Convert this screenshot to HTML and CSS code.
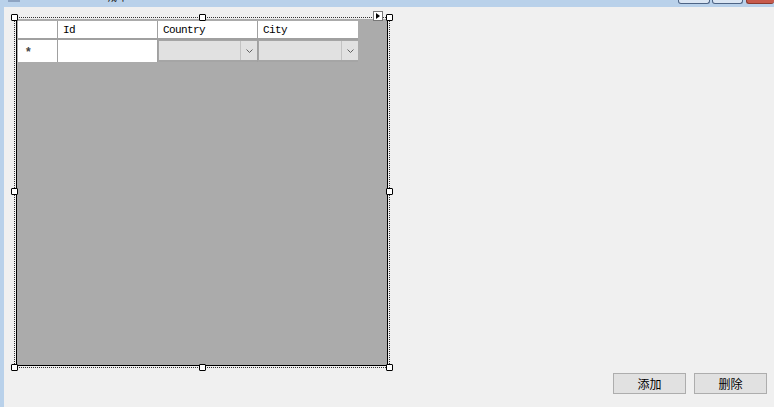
FILE: index.html
```html
<!DOCTYPE html>
<html lang="zh-CN">

<head>
    <meta charset="UTF-8">
    <meta name="viewport" content="width=device-width, initial-scale=1.0">
    <title>城市管理</title>
    <link rel="stylesheet" href="styles.css">
</head>

<body>
    <div class="titlebar">
        <span class="app-icon"></span>
        <span class="title">城市</span>
        <div class="win-controls">
            <span class="ctl min"></span>
            <span class="ctl max"></span>
            <span class="ctl close"></span>
        </div>
    </div>

    <div class="frame">
        <div class="frame-edge"></div>

        <div class="client">
            <div class="selected">
                <div class="grid">
                    <div class="table">
                        <div class="cell head"></div>
                        <div class="cell head">Id</div>
                        <div class="cell head">Country</div>
                        <div class="cell head">City</div>

                        <div class="cell row-head">*</div>
                        <div class="cell"></div>
                        <div class="cell combo">
                            <span class="combo-text"></span>
                            <span class="combo-btn">
                                <svg width="7" height="4" viewBox="0 0 7 4"><path d="M0.5 0.5 L3.5 3.5 L6.5 0.5" fill="none" stroke="#606060" stroke-width="1"/></svg>
                            </span>
                        </div>
                        <div class="cell combo">
                            <span class="combo-text"></span>
                            <span class="combo-btn">
                                <svg width="7" height="4" viewBox="0 0 7 4"><path d="M0.5 0.5 L3.5 3.5 L6.5 0.5" fill="none" stroke="#606060" stroke-width="1"/></svg>
                            </span>
                        </div>
                    </div>
                </div>

                <!-- designer selection handles -->
                <span class="handle h-tl"></span>
                <span class="handle h-tc"></span>
                <span class="handle h-tr"></span>
                <span class="handle h-ml"></span>
                <span class="handle h-mr"></span>
                <span class="handle h-bl"></span>
                <span class="handle h-bc"></span>
                <span class="handle h-br"></span>
                <span class="smart-tag">
                    <svg width="4" height="6" viewBox="0 0 4 6"><path d="M0 0 L4 3 L0 6 Z" fill="#000"/></svg>
                </span>
            </div>

            <div class="actions">
                <button type="button" class="btn">添加</button>
                <button type="button" class="btn">删除</button>
            </div>
        </div>
    </div>
</body>

</html>
```

FILE: styles.css
```css
body {
    margin: 0;
    height: 407px;
    overflow: hidden;
    background-color: #b9d1ea;
    font-family: 'Noto Sans CJK SC', sans-serif;
}

.titlebar {
    height: 7px;
    display: flex;
    align-items: flex-start;
    background-color: #b9d1ea;
}

.app-icon {
    width: 12px;
    height: 2px;
    margin-left: 8px;
    background-color: #8ea4c2;
}

.title {
    margin-left: 85px;
    margin-top: -10px;
    font-size: 12px;
    line-height: 12px;
    color: #1a1a1a;
}

.win-controls {
    margin-left: auto;
    display: flex;
    gap: 2px;
}

.ctl {
    height: 3px;
    border: 1px solid #4d6485;
    border-top: none;
    border-radius: 0 0 3px 3px;
    background-color: #dbe6f3;
}

.min {
    width: 30px;
}

.max {
    width: 29px;
}

.close {
    width: 27px;
    margin-left: 1px;
    border-color: #8a3a30;
    border-right: none;
    background-color: #c75a4c;
}

.frame {
    display: flex;
    height: 400px;
}

.frame-edge {
    width: 4px;
    background-color: #b9d1ea;
}

.client {
    flex: 1;
    background-color: #f0f0f0;
    padding: 12px 7px 0 12px;
}

.selected {
    position: relative;
    width: 372px;
    height: 347px;
    outline: 1px dotted #333;
    outline-offset: 1px;
}

.grid {
    box-sizing: border-box;
    width: 100%;
    height: 100%;
    padding: 1px;
    background-color: #ababab;
    border: 1px solid #000;
    border-top-color: #ababab;
}

.table {
    display: grid;
    grid-template-columns: 39px 99px 99px 100px;
    grid-template-rows: 17px 22px;
    column-gap: 1px;
    row-gap: 2px;
    width: max-content;
    background-color: #a0a0a0;
}

.cell {
    background-color: #fff;
}

.head {
    padding-left: 5px;
    font-family: 'Liberation Mono', monospace;
    font-size: 11px;
    letter-spacing: -0.6px;
    line-height: 19px;
    color: #000;
}

.row-head {
    padding: 6px 0 0 8px;
    font-family: 'Liberation Sans', sans-serif;
    font-weight: bold;
    font-size: 12px;
    line-height: 12px;
    color: #444;
}

.combo {
    display: flex;
    padding: 1px 0 2px 1px;
    background-color: #a5a5a5;
}

.combo-text {
    flex: 1;
    background-color: #e1e1e1;
}

.combo-btn {
    box-sizing: border-box;
    width: 17px;
    display: flex;
    align-items: center;
    justify-content: center;
    border-left: 1px solid #c2c2c2;
    background-color: #e1e1e1;
}

.handle {
    position: absolute;
    box-sizing: border-box;
    width: 7px;
    height: 7px;
    background-color: #fff;
    border: 1px solid #000;
    border-radius: 1px;
}

.h-tl { left: -5px; top: -5px; }
.h-tc { left: 183px; top: -5px; }
.h-tr { right: -5px; top: -5px; }
.h-ml { left: -5px; top: 169px; }
.h-mr { right: -5px; top: 169px; }
.h-bl { left: -5px; bottom: -5px; }
.h-bc { left: 183px; bottom: -5px; }
.h-br { right: -5px; bottom: -5px; }

.smart-tag {
    position: absolute;
    top: -8px;
    right: 5px;
    box-sizing: border-box;
    width: 10px;
    height: 10px;
    display: flex;
    align-items: center;
    justify-content: center;
    background-color: #fff;
    border: 1px solid #777;
}

.actions {
    display: flex;
    justify-content: flex-end;
    gap: 8px;
    margin-top: 7px;
}

.btn {
    width: 73px;
    height: 21px;
    padding: 0;
    background-color: #e1e1e1;
    border: 1px solid #adadad;
    font-family: 'Noto Sans CJK SC', sans-serif;
    font-size: 12px;
    color: #000;
}
```
